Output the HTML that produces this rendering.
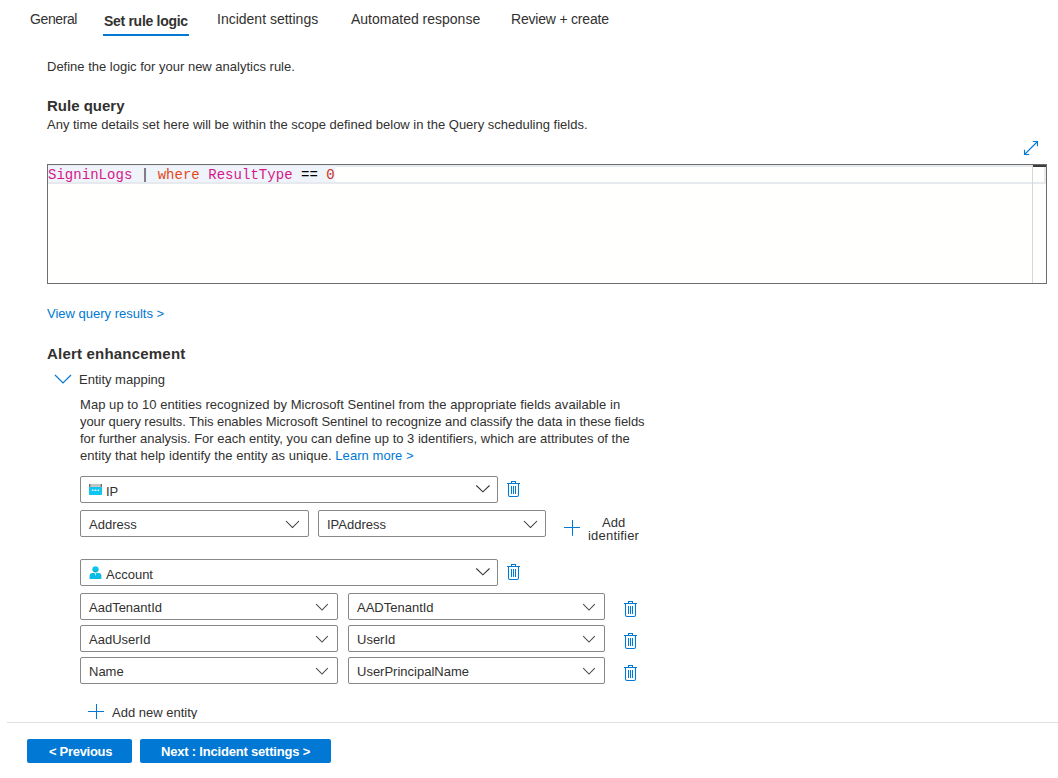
<!DOCTYPE html>
<html><head><meta charset="utf-8">
<style>
html,body{margin:0;padding:0;background:#fff;width:1058px;height:778px;overflow:hidden;position:relative;}
body{font-family:"Liberation Sans",sans-serif;color:#323130;}
.t{position:absolute;white-space:nowrap;line-height:1;}
.s13{font-size:13px;}
.s14{font-size:14px;}
.b{font-weight:bold;}
.link{color:#0078d4;}
.box{position:absolute;box-sizing:border-box;border:1px solid #8a8886;border-radius:2px;background:#fff;height:27px;}
.ic{position:absolute;}
.code{position:absolute;font-family:"Liberation Mono",monospace;font-size:14px;line-height:1;white-space:pre;}
.btn{position:absolute;background:#0078d4;border-radius:2px;color:#fff;font-weight:bold;font-size:13px;line-height:1;white-space:nowrap;}
</style></head>
<body>
<div class="t s14" style="left:30px;top:12px;letter-spacing:-0.4px;">General</div>
<div class="t s14 b" style="left:104px;top:14px;letter-spacing:-0.3px;">Set rule logic</div>
<div class="t s14" style="left:217px;top:12px;">Incident settings</div>
<div class="t s14" style="left:351px;top:12px;">Automated response</div>
<div class="t s14" style="left:511px;top:12px;letter-spacing:-0.2px;">Review + create</div>
<div style="position:absolute;left:103px;top:34px;width:86px;height:2px;background:#0078d4;"></div>
<div class="t s13" style="left:47px;top:60px;">Define the logic for your new analytics rule.</div>
<div class="t b" style="left:47px;top:98px;font-size:15px;">Rule query</div>
<div class="t s13" style="left:47px;top:118px;">Any time details set here will be within the scope defined below in the Query scheduling fields.</div>
<svg class="ic" style="left:1022px;top:139px" width="18" height="18" viewBox="0 0 18 18"><path d="M2.5 15.5 L15.5 2.5 M10.8 2.5 H15.5 V7.2 M2.5 10.8 V15.5 H7.2" stroke="#0078d4" stroke-width="1.1" fill="none"/></svg>
<div style="position:absolute;left:47px;top:164px;width:1000px;height:120px;box-sizing:border-box;border:1px solid #6e6e6e;background:#fffffe;"></div>
<div style="position:absolute;left:48px;top:165px;width:998px;height:19px;box-sizing:border-box;border:2px solid #e6eaef;border-left:0;"></div>
<div style="position:absolute;left:48px;top:166px;width:287px;height:16px;background:#eef4fa;"></div>
<div style="position:absolute;left:1032px;top:165px;width:1px;height:118px;background:#d8d8d8;"></div>
<div style="position:absolute;left:1033px;top:165px;width:13px;height:2px;background:#3c3c3c;"></div>
<div class="code" style="left:48px;top:168px;letter-spacing:0.03px;"><span style="color:#d7178a">SigninLogs</span> <span style="color:#323130">|</span> <span style="color:#e4491c">where</span> <span style="color:#d7178a">ResultType</span> <span style="color:#000">==</span> <span style="color:#c8321f">0</span></div>
<div class="t s13 link" style="left:47px;top:307px;">View query results &gt;</div>
<div class="t b" style="left:47px;top:346px;font-size:15px;letter-spacing:0.2px;">Alert enhancement</div>
<svg class="ic" style="left:54px;top:374px" width="18" height="11" viewBox="0 0 18 11"><path d="M1 1 L9 9 L17 1" stroke="#0078d4" stroke-width="1.2" fill="none"/></svg>
<div class="t s13" style="left:79px;top:373px;">Entity mapping</div>
<div class="t s13" style="left:80px;top:398px;letter-spacing:0.05px;">Map up to 10 entities recognized by Microsoft Sentinel from the appropriate fields available in</div>
<div class="t s13" style="left:80px;top:415px;letter-spacing:-0.06px;">your query results. This enables Microsoft Sentinel to recognize and classify the data in these fields</div>
<div class="t s13" style="left:80px;top:432px;">for further analysis. For each entity, you can define up to 3 identifiers, which are attributes of the</div>
<div class="t s13" style="left:80px;top:449px;letter-spacing:0.05px;">entity that help identify the entity as unique. <span class="link">Learn more &gt;</span></div>
<div class="box" style="left:80px;top:476px;width:418px;"></div>
<svg class="ic" style="left:89px;top:484px" width="13" height="11" viewBox="0 0 13 11"><rect x="0" y="0" width="13" height="3.5" rx="0.8" fill="#c4c4c4"/><rect x="0" y="0" width="1.3" height="3" fill="#6b6b6b"/><rect x="11.7" y="0" width="1.3" height="3" fill="#6b6b6b"/><rect x="0" y="3" width="13" height="8" rx="0.8" fill="#10c6f0"/><path d="M3.5 6.3 H9.5" stroke="#bfefff" stroke-width="0.5"/><circle cx="3.6" cy="6.3" r="0.8" fill="#fff"/><circle cx="6.5" cy="6.3" r="0.8" fill="#fff"/><circle cx="9.4" cy="6.3" r="0.8" fill="#fff"/></svg>
<div class="t s13" style="left:106px;top:485px;">IP</div>
<svg class="ic" style="left:475px;top:484px" width="16" height="10" viewBox="0 0 16 10"><path d="M1.3 1.5 L7.9 7.8 L14.5 1.5" stroke="#323130" stroke-width="1.05" fill="none"/></svg>
<svg class="ic" style="left:503px;top:478px" width="22" height="22" viewBox="0 0 22 22"><path d="M8.5 5.5 V3.5 H12.5 V5.5 M4 5.5 H17 M5.5 5.5 V17 Q5.5 18.5 7 18.5 H14 Q15.5 18.5 15.5 17 V5.5 M8.5 8 V16 M10.5 8 V16 M12.5 8 V16" stroke="#0078d4" stroke-width="1.05" fill="none"/></svg>
<div class="box" style="left:80px;top:510px;width:229px;"></div>
<div class="t s13" style="left:89px;top:518px;">Address</div>
<svg class="ic" style="left:285px;top:520px" width="16" height="10" viewBox="0 0 16 10"><path d="M1 1 L7.5 7.5 L14 1" stroke="#323130" stroke-width="1.05" fill="none"/></svg>
<div class="box" style="left:318px;top:510px;width:228px;"></div>
<div class="t s13" style="left:327px;top:518px;">IPAddress</div>
<svg class="ic" style="left:523px;top:520px" width="16" height="10" viewBox="0 0 16 10"><path d="M1 1 L7.5 7.5 L14 1" stroke="#323130" stroke-width="1.05" fill="none"/></svg>
<svg class="ic" style="left:563px;top:519px" width="18" height="18" viewBox="0 0 18 18"><path d="M1 8.5 H17 M9.5 1 V16.7" stroke="#0078d4" stroke-width="1.05" fill="none"/></svg>
<div class="t s13" style="left:602px;top:516px;">Add</div>
<div class="t s13" style="left:588px;top:529px;letter-spacing:0.2px;">identifier</div>
<div class="box" style="left:80px;top:559px;width:418px;"></div>
<svg class="ic" style="left:89px;top:565px" width="13" height="15" viewBox="0 0 13 15"><defs><linearGradient id="ag" x1="0" y1="0" x2="0" y2="1"><stop offset="0" stop-color="#0ad2f6"/><stop offset="1" stop-color="#0aaed6"/></linearGradient></defs><circle cx="6.5" cy="4.3" r="3.15" fill="url(#ag)"/><path d="M0.6 14 V10.5 Q0.6 8 3 8 H10 Q12.4 8 12.4 10.5 V14 Z" fill="#0bbde6"/><path d="M5.8 8 H7.2 L6.9 9.2 L6.5 11 L6.1 9.2 Z" fill="#e6fbff"/></svg>
<div class="t s13" style="left:106px;top:568px;">Account</div>
<svg class="ic" style="left:475px;top:567px" width="16" height="10" viewBox="0 0 16 10"><path d="M1.3 1.5 L7.9 7.8 L14.5 1.5" stroke="#323130" stroke-width="1.05" fill="none"/></svg>
<svg class="ic" style="left:503px;top:561px" width="22" height="22" viewBox="0 0 22 22"><path d="M8.5 5.5 V3.5 H12.5 V5.5 M4 5.5 H17 M5.5 5.5 V17 Q5.5 18.5 7 18.5 H14 Q15.5 18.5 15.5 17 V5.5 M8.5 8 V16 M10.5 8 V16 M12.5 8 V16" stroke="#0078d4" stroke-width="1.05" fill="none"/></svg>
<div class="box" style="left:80px;top:593px;width:258px;"></div>
<div class="t s13" style="left:89px;top:601px;">AadTenantId</div>
<svg class="ic" style="left:315px;top:603px" width="16" height="10" viewBox="0 0 16 10"><path d="M1.2 1.2 L7 7.1 L12.8 1.2" stroke="#4a4846" stroke-width="1.05" fill="none"/></svg>
<div class="box" style="left:348px;top:593px;width:257px;"></div>
<div class="t s13" style="left:357px;top:601px;">AADTenantId</div>
<svg class="ic" style="left:582px;top:603px" width="16" height="10" viewBox="0 0 16 10"><path d="M1.2 1.2 L7 7.1 L12.8 1.2" stroke="#4a4846" stroke-width="1.05" fill="none"/></svg>
<svg class="ic" style="left:620px;top:598px" width="22" height="22" viewBox="0 0 22 22"><path d="M8.5 5.5 V3.5 H12.5 V5.5 M4 5.5 H17 M5.5 5.5 V17 Q5.5 18.5 7 18.5 H14 Q15.5 18.5 15.5 17 V5.5 M8.5 8 V16 M10.5 8 V16 M12.5 8 V16" stroke="#0078d4" stroke-width="1.05" fill="none"/></svg>
<div class="box" style="left:80px;top:625px;width:258px;"></div>
<div class="t s13" style="left:89px;top:633px;">AadUserId</div>
<svg class="ic" style="left:315px;top:635px" width="16" height="10" viewBox="0 0 16 10"><path d="M1.2 1.2 L7 7.1 L12.8 1.2" stroke="#4a4846" stroke-width="1.05" fill="none"/></svg>
<div class="box" style="left:348px;top:625px;width:257px;"></div>
<div class="t s13" style="left:357px;top:633px;">UserId</div>
<svg class="ic" style="left:582px;top:635px" width="16" height="10" viewBox="0 0 16 10"><path d="M1.2 1.2 L7 7.1 L12.8 1.2" stroke="#4a4846" stroke-width="1.05" fill="none"/></svg>
<svg class="ic" style="left:620px;top:630px" width="22" height="22" viewBox="0 0 22 22"><path d="M8.5 5.5 V3.5 H12.5 V5.5 M4 5.5 H17 M5.5 5.5 V17 Q5.5 18.5 7 18.5 H14 Q15.5 18.5 15.5 17 V5.5 M8.5 8 V16 M10.5 8 V16 M12.5 8 V16" stroke="#0078d4" stroke-width="1.05" fill="none"/></svg>
<div class="box" style="left:80px;top:657px;width:258px;"></div>
<div class="t s13" style="left:89px;top:665px;">Name</div>
<svg class="ic" style="left:315px;top:667px" width="16" height="10" viewBox="0 0 16 10"><path d="M1.2 1.2 L7 7.1 L12.8 1.2" stroke="#4a4846" stroke-width="1.05" fill="none"/></svg>
<div class="box" style="left:348px;top:657px;width:257px;"></div>
<div class="t s13" style="left:357px;top:665px;">UserPrincipalName</div>
<svg class="ic" style="left:582px;top:667px" width="16" height="10" viewBox="0 0 16 10"><path d="M1.2 1.2 L7 7.1 L12.8 1.2" stroke="#4a4846" stroke-width="1.05" fill="none"/></svg>
<svg class="ic" style="left:620px;top:662px" width="22" height="22" viewBox="0 0 22 22"><path d="M8.5 5.5 V3.5 H12.5 V5.5 M4 5.5 H17 M5.5 5.5 V17 Q5.5 18.5 7 18.5 H14 Q15.5 18.5 15.5 17 V5.5 M8.5 8 V16 M10.5 8 V16 M12.5 8 V16" stroke="#0078d4" stroke-width="1.05" fill="none"/></svg>
<div style="position:absolute;left:0;top:690px;width:1058px;height:29px;overflow:hidden;">
<svg class="ic" style="left:87px;top:13px" width="18" height="18" viewBox="0 0 18 18"><path d="M1 8.5 H17 M9.5 1 V16.7" stroke="#0078d4" stroke-width="1.05" fill="none"/></svg>
<div class="t s13" style="left:112px;top:16px;">Add new entity</div>
</div>
<div style="position:absolute;left:7px;top:722px;width:1051px;height:1px;background:#e1dfdd;"></div>
<div class="btn" style="left:27px;top:739px;width:105px;height:24px;"><span style="position:absolute;left:22px;top:6px;letter-spacing:-0.3px;">&lt; Previous</span></div>
<div class="btn" style="left:140px;top:739px;width:191px;height:24px;"><span style="position:absolute;left:21px;top:6px;letter-spacing:-0.2px;">Next : Incident settings &gt;</span></div>
</body></html>
